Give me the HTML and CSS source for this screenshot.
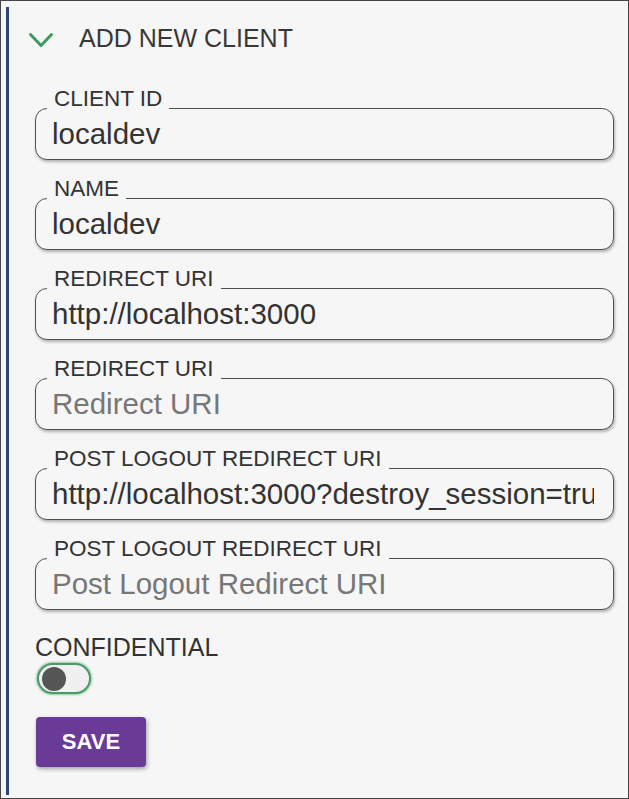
FILE: index.html
```html
<!DOCTYPE html>
<html lang="en">
<head>
<meta charset="utf-8">
<title>Add new client</title>
<link rel="stylesheet" href="styles.css">
</head>
<body>
<div class="frame">
  <section class="panel">
    <div class="head">
      <svg class="chevron" width="26" height="18" viewBox="0 0 26 18" aria-hidden="true">
        <path d="M2.5 3.5 L13 14.5 L23.5 3.5" fill="none" stroke="#3d9a5f" stroke-width="3" stroke-linecap="round" stroke-linejoin="round"/>
      </svg>
      <span class="head-title">ADD NEW CLIENT</span>
    </div>
    <form class="form">
      <div class="field">
        <label class="field-label">CLIENT ID</label>
        <input class="field-input" type="text" value="localdev">
      </div>
      <div class="field">
        <label class="field-label">NAME</label>
        <input class="field-input" type="text" value="localdev">
      </div>
      <div class="field">
        <label class="field-label">REDIRECT URI</label>
        <input class="field-input" type="text" value="http://localhost:3000">
      </div>
      <div class="field">
        <label class="field-label">REDIRECT URI</label>
        <input class="field-input" type="text" placeholder="Redirect URI">
      </div>
      <div class="field">
        <label class="field-label">POST LOGOUT REDIRECT URI</label>
        <input class="field-input" type="text" value="http://localhost:3000?destroy_session=true">
      </div>
      <div class="field field-last">
        <label class="field-label">POST LOGOUT REDIRECT URI</label>
        <input class="field-input" type="text" placeholder="Post Logout Redirect URI">
      </div>
      <div class="confidential">CONFIDENTIAL</div>
      <div class="toggle"><span class="knob"></span></div>
      <button class="save" type="button">SAVE</button>
    </form>
  </section>
</div>
</body>
</html>
```

FILE: styles.css
```css
html, body {
  margin: 0;
  padding: 0;
}

body {
  font-family: "Liberation Sans", Arial, sans-serif;
  color: #333;
  background: #f6f6f6;
}

.frame {
  width: 629px;
  height: 799px;
  box-sizing: border-box;
  border: 1px solid #444;
  background: #f6f6f6;
  padding: 6px 0 3px 5px;
}

.panel {
  height: 100%;
  box-sizing: border-box;
  border-left: 3px solid #2d4671;
}

.head {
  display: flex;
  align-items: center;
  padding: 17px 0 0 19px;
}

.chevron {
  display: block;
  margin-top: 3px;
  margin-right: 25px;
}

.head-title {
  font-size: 25px;
  line-height: 29px;
  color: #383838;
}

.form {
  display: flex;
  flex-direction: column;
  align-items: stretch;
  margin: 35px 0 0 0;
  padding: 0 14px 0 26px;
}

.field {
  display: flex;
  flex-direction: column;
  margin-bottom: 18px;
}

.field-last {
  margin-bottom: 0;
}

.field-label {
  position: relative;
  z-index: 1;
  align-self: flex-start;
  margin-left: 12px;
  margin-bottom: -2px;
  padding: 0 7px;
  font-size: 22.5px;
  line-height: 22px;
  color: #333;
  background: #f6f6f6;
}

.field-input {
  display: block;
  width: 100%;
  height: 52px;
  box-sizing: border-box;
  margin: 0;
  padding: 0 19px 0 16px;
  border: 1.5px solid #505050;
  border-radius: 12px;
  background: #f6f6f6;
  box-shadow: 1px 2px 3px rgba(0, 0, 0, 0.28);
  font-family: "Liberation Sans", Arial, sans-serif;
  font-size: 29.5px;
  color: #333;
  outline: none;
}

.field-input::placeholder {
  color: #777;
}

.confidential {
  margin-top: 23px;
  font-size: 25px;
  line-height: 28px;
  color: #333;
}

.toggle {
  align-self: flex-start;
  display: flex;
  align-items: center;
  width: 54px;
  height: 31px;
  box-sizing: border-box;
  margin: 2px 0 0 2px;
  padding-left: 3px;
  border: 2px solid #4c9a68;
  border-radius: 16px;
  background: #f0f0f0;
  box-shadow: 0 0 2px 1px rgba(70, 160, 100, 0.55);
}

.knob {
  display: block;
  width: 24px;
  height: 24px;
  border-radius: 50%;
  background: #555;
}

.save {
  align-self: flex-start;
  width: 110px;
  height: 50px;
  margin: 23px 0 0 1px;
  padding: 0;
  border: none;
  border-radius: 4px;
  background: #6a3a97;
  box-shadow: 1px 2px 4px rgba(0, 0, 0, 0.35);
  color: #fff;
  font-family: "Liberation Sans", Arial, sans-serif;
  font-size: 22px;
  font-weight: bold;
  cursor: pointer;
}
```
